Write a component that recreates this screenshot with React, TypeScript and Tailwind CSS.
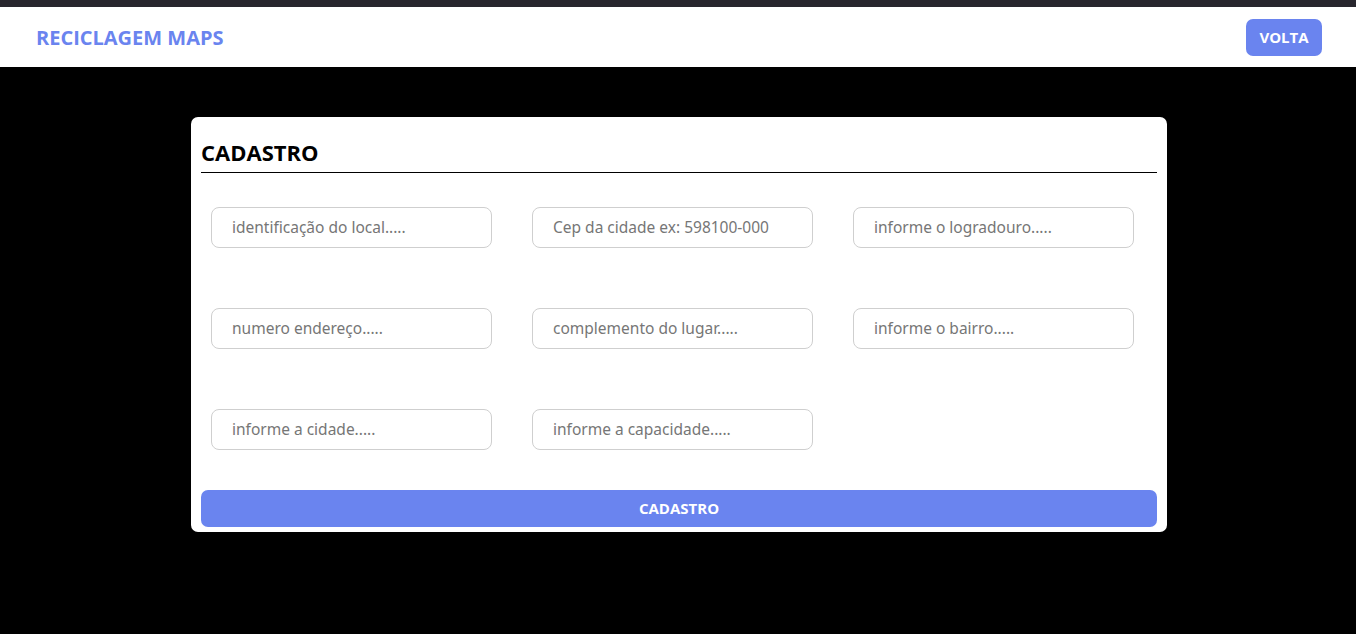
import React from "react";

const fields = [
  "identificação do local.....",
  "Cep da cidade ex: 598100-000",
  "informe o logradouro.....",
  "numero endereço.....",
  "complemento do lugar.....",
  "informe o bairro.....",
  "informe a cidade.....",
  "informe a capacidade.....",
];

export default function App() {
  return (
    <div className="min-h-[634px] bg-black" style={{ fontFamily: '"Open Sans", "Noto Sans", sans-serif' }}>
      <div className="h-[7px] bg-[#28262e]" />
      <header className="h-[60px] bg-white flex items-center justify-between pl-[36px] pr-[34px]">
        <h1 className="text-[20px] font-bold text-[#6a84ef] pt-[1px]">RECICLAGEM MAPS</h1>
        <button className="h-[37px] w-[76px] rounded-[7px] bg-[#6a84ef] text-white text-[15px] font-bold">VOLTA</button>
      </header>
      <div className="flex justify-center pt-[50px] pl-[2px]">
        <div className="w-[976px] bg-white rounded-[7px] px-[10px] pt-[21px] pb-[5px]">
          <h2 className="text-[22px] font-bold text-black leading-[28px] pb-[6px] border-b border-black">CADASTRO</h2>
          <div className="grid grid-cols-[281px_281px_281px] gap-x-[40px] gap-y-[60px] pl-[10px] pt-[34px]">
            {fields.map((f) => (
              <input
                key={f}
                placeholder={f}
                className="h-[41px] w-[281px] rounded-[8px] border border-[#cfcfcf] px-[20px] pb-[2px] text-[15.5px] placeholder:text-[#767676] outline-none"
                style={{ fontFamily: '"Noto Sans", sans-serif' }}
              />
            ))}
          </div>
          <button className="mt-[40px] w-full h-[37px] rounded-[7px] bg-[#6a84ef] text-white text-[15px] font-bold">CADASTRO</button>
        </div>
      </div>
    </div>
  );
}
